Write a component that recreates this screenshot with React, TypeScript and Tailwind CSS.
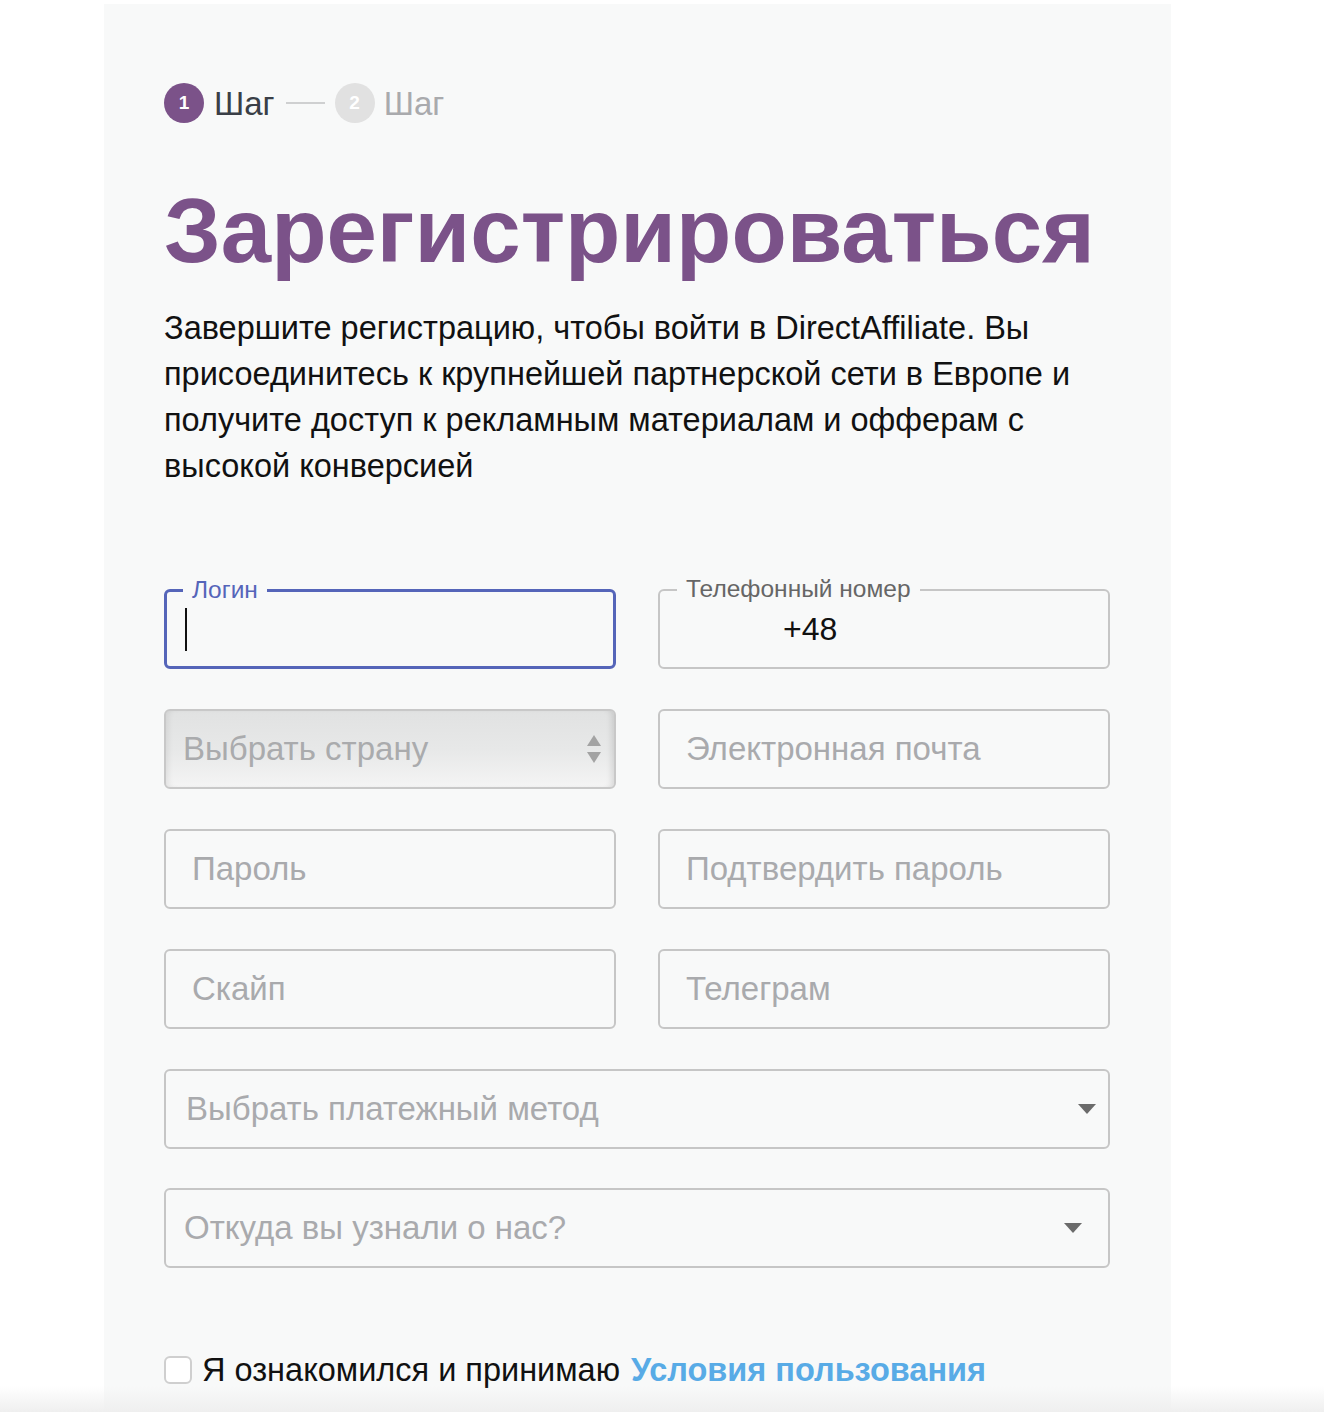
import React from "react";

const font = { fontFamily: '"Liberation Sans", Arial, Helvetica, sans-serif' };

function Field({ placeholder }: { placeholder: string }) {
  return (
    <div className="h-[80px] rounded-[6px] border-2 border-[#c6c6c6] flex items-center pl-[26px]">
      <span className="text-[33px] text-[#a9aaad]">{placeholder}</span>
    </div>
  );
}

function DropField({ placeholder, pl, pr }: { placeholder: string; pl: string; pr: string }) {
  return (
    <div className={`h-[80px] rounded-[6px] border-2 border-[#c6c6c6] flex items-center justify-between ${pl} ${pr}`}>
      <span className="text-[33px] text-[#a9aaad]">{placeholder}</span>
      <svg width="18" height="10" viewBox="0 0 18 10">
        <polygon points="0,0 18,0 9,10" fill="#6b6b6b" />
      </svg>
    </div>
  );
}

export default function App() {
  return (
    <div className="min-h-[1412px] bg-white pl-[104px] pt-[4px] relative overflow-hidden" style={font}>
      <div className="w-[1067px] min-h-[1408px] bg-[#f8f9f9] px-[60px] pt-[79px]">
        {/* Steps */}
        <div className="flex items-center h-[40px]">
          <div className="w-[40px] h-[40px] rounded-full bg-[#7b5289] text-white text-[19px] font-bold flex items-center justify-center">1</div>
          <span className="ml-[10px] text-[33px] text-[#3a3f47] leading-none">Шаг</span>
          <div className="ml-[11px] w-[39px] h-[2px] bg-[#cfd0d1]" />
          <div className="ml-[10px] w-[40px] h-[40px] rounded-full bg-[#e1e1e1] text-white text-[19px] font-bold flex items-center justify-center">2</div>
          <span className="ml-[9px] text-[33px] text-[#a9aaad] leading-none">Шаг</span>
        </div>

        {/* Heading */}
        <h1 className="mt-[58px] text-[90.6px] leading-[100px] font-bold text-[#7b5289]">Зарегистрироваться</h1>

        <p className="mt-[24px] text-[32.5px] leading-[46px] text-[#111111] w-[946px]">
          Завершите регистрацию, чтобы войти в DirectAffiliate. Вы присоединитесь к крупнейшей партнерской сети в Европе и получите доступ к рекламным материалам и офферам с высокой конверсией
        </p>

        {/* Form */}
        <div className="mt-[100px] w-[946px] grid grid-cols-2 gap-x-[42px] gap-y-[40px]">
          <div className="relative h-[80px] rounded-[6px] border-[3px] border-[#5565b9] flex items-center pl-[18px]">
            <span className="absolute -top-[17px] left-[16px] px-[9px] bg-[#f8f9f9] text-[24.5px] leading-[30px] text-[#5565b9]">Логин</span>
            <div className="w-[2px] h-[43px] bg-[#111]" />
          </div>
          <div className="relative h-[80px] rounded-[6px] border-2 border-[#c6c6c6] flex items-center pl-[123px]">
            <span className="absolute -top-[17px] left-[17px] px-[9px] bg-[#f8f9f9] text-[24.5px] leading-[30px] text-[#666666]">Телефонный номер</span>
            <span className="text-[32px] text-[#111111]">+48</span>
          </div>

          <div className="h-[80px] rounded-[6px] border-2 border-[#c8c8c8] bg-gradient-to-b from-[#e1e2e2] via-[#e7e8e8] to-[#f4f4f4] shadow-[inset_-6px_0_6px_-4px_rgba(0,0,0,0.12),inset_6px_0_6px_-4px_rgba(0,0,0,0.08)] flex items-center justify-between pl-[17px] pr-[13px]">
            <span className="text-[33px] text-[#aaabad]">Выбрать страну</span>
            <svg width="14" height="28" viewBox="0 0 14 28">
              <polygon points="7,0 14,11 0,11" fill="#a3a3a3" />
              <polygon points="0,17 14,17 7,28" fill="#a3a3a3" />
            </svg>
          </div>
          <Field placeholder="Электронная почта" />

          <Field placeholder="Пароль" />
          <Field placeholder="Подтвердить пароль" />

          <Field placeholder="Скайп" />
          <Field placeholder="Телеграм" />

          <div className="col-span-2">
            <DropField placeholder="Выбрать платежный метод" pl="pl-[20px]" pr="pr-[12px]" />
          </div>
          <div className="col-span-2 -mt-[1px]">
            <DropField placeholder="Откуда вы узнали о нас?" pl="pl-[18px]" pr="pr-[26px]" />
          </div>
        </div>

        {/* Terms */}
        <div className="mt-[78px] flex items-center">
          <div className="w-[28px] h-[28px] rounded-[6px] border-2 border-[#cfcfcf] bg-white" />
          <span className="ml-[10px] text-[32.5px] text-[#111111]">Я ознакомился и принимаю</span>
          <span className="ml-[11px] text-[32.5px] font-bold text-[#58abe6]">Условия пользования</span>
        </div>
      </div>
      <div className="absolute left-0 right-0 bottom-0 h-[26px] bg-gradient-to-b from-transparent to-[#efefef] pointer-events-none" />
    </div>
  );
}
